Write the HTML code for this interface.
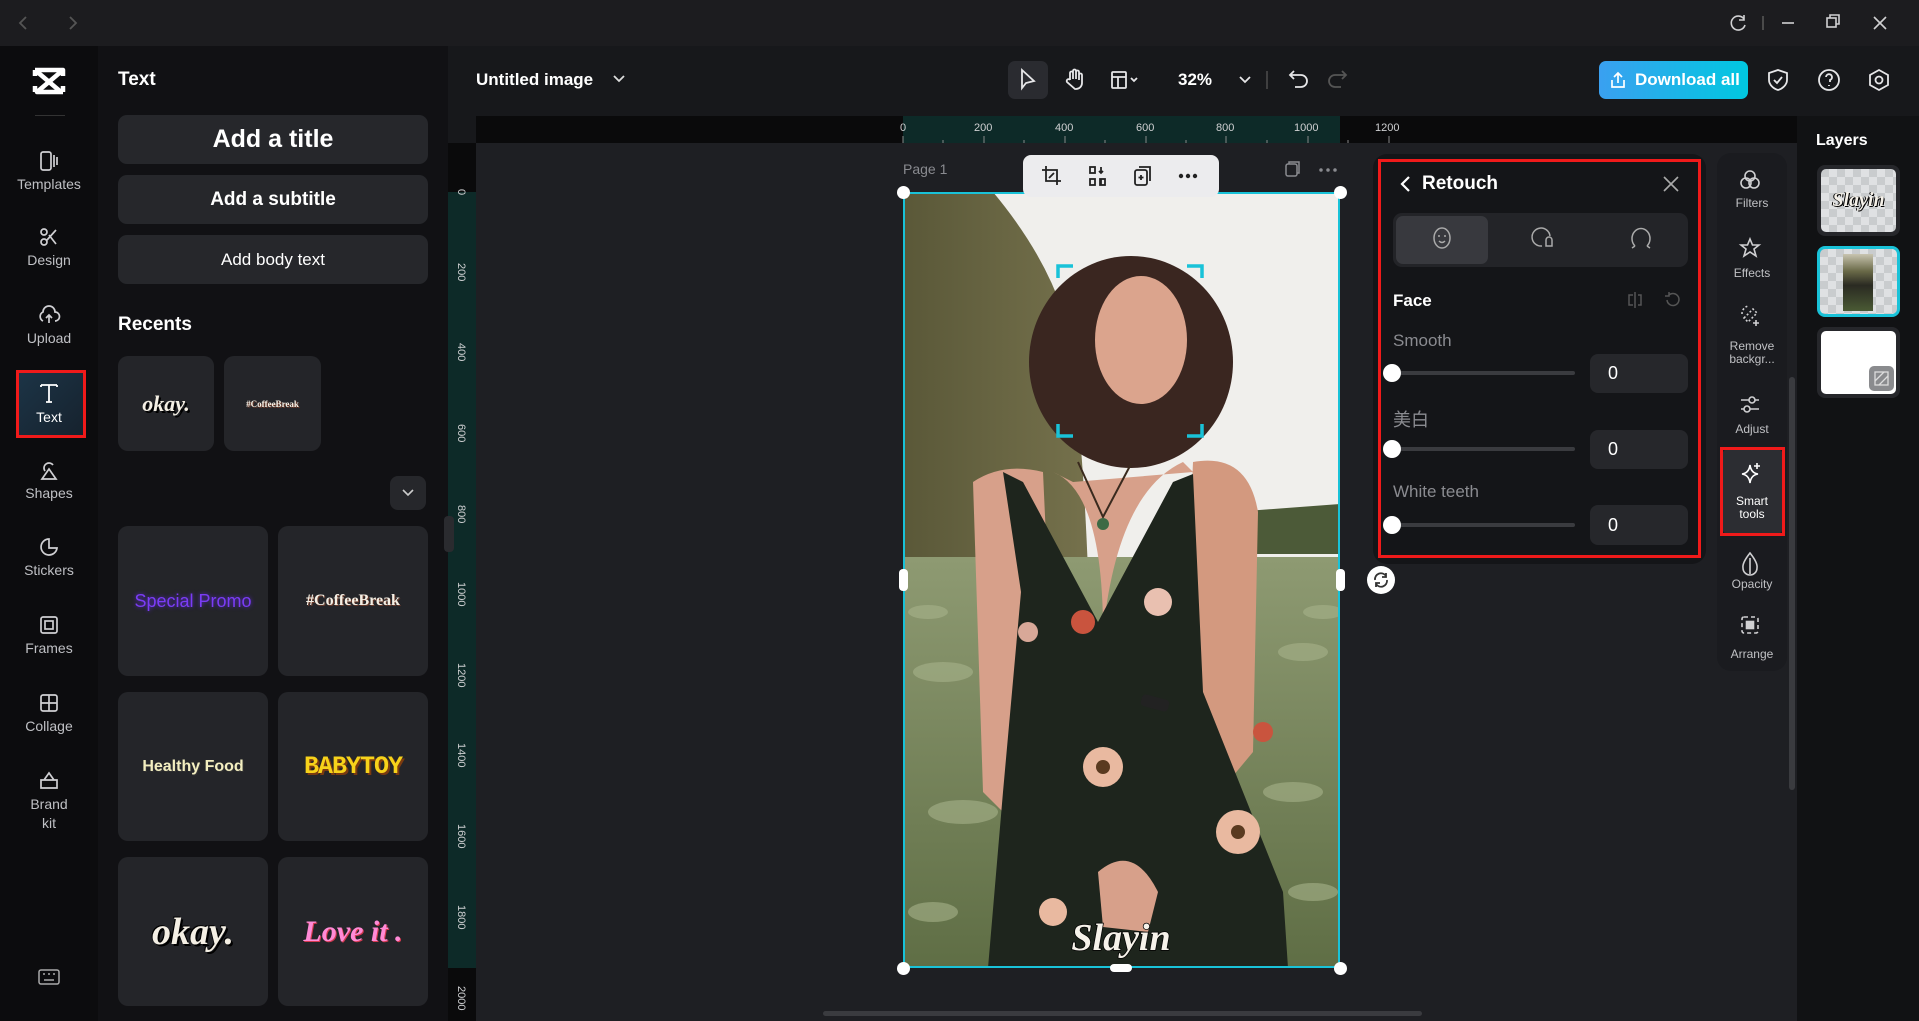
<!DOCTYPE html>
<html><head><meta charset="utf-8"><style>
*{box-sizing:border-box;margin:0;padding:0}
body{width:1919px;height:1021px;background:#1e1f23;font-family:"Liberation Sans","Noto Sans CJK SC",sans-serif;color:#e8e8ea;position:relative;overflow:hidden}
.a{position:absolute}
.titlebar{left:0;top:0;width:1919px;height:46px;background:#1c1c1f}
.rail{left:0;top:46px;width:98px;height:975px;background:#0c0c0e}
.ri{position:absolute;left:0;width:98px;text-align:center;font-size:14px;color:#bfc0c4}
.ri svg{display:block;margin:0 auto 4px}
.panel{left:98px;top:46px;width:350px;height:975px;background:#111114}
.btn{position:absolute;left:118px;width:310px;height:49px;background:#26272b;border-radius:9px;text-align:center;color:#fff;font-weight:bold}
.tile{position:absolute;background:#242529;border-radius:10px;display:flex;align-items:center;justify-content:center}
.toolbar{left:448px;top:46px;width:1471px;height:70px;background:#17181b}
</style></head><body>

<div class="a titlebar"></div>
<svg class="a" style="left:18px;top:14px" width="60" height="18"><path d="M8 3 L2 9 L8 15 M52 3 L58 9 L52 15" stroke="#555" stroke-width="1.8" fill="none"/></svg>
<svg class="a" style="left:1726px;top:13px" width="170" height="20" fill="none" stroke="#d0d0d2" stroke-width="1.6">
<path d="M18 6 A7 7 0 1 0 19 12 M18 2 V7 H13"/>
<path d="M37 3 V17" stroke="#555"/>
<path d="M56 10 H68"/>
<rect x="101" y="5" width="9" height="9"/><path d="M104 5 V2 H113 V11 H110"/>
<path d="M148 4 L160 16 M160 4 L148 16"/>
</svg>

<div class="a rail"></div>
<svg class="a" style="left:32px;top:66px" width="34" height="30" viewBox="0 0 34 30"><path d="M3 4 H31 L5 26 H31 M3 4 L29 26 M3 4 V10 M31 20 V26 M3 26 V20 M31 4 V10" stroke="#fff" stroke-width="4.5" fill="none" stroke-linejoin="round"/></svg>
<div class="a" style="left:35px;top:115px;width:30px;height:1px;background:#333"></div>
<div class="ri" style="top:150px"><svg width="24" height="22" fill="none" stroke="#cfcfd2" stroke-width="1.7"><rect x="4" y="2" width="10" height="18" rx="2"/><path d="M17 5 V17 M20 7 V15"/></svg>Templates</div>
<div class="ri" style="top:226px"><svg width="24" height="22" fill="none" stroke="#cfcfd2" stroke-width="1.7"><circle cx="7" cy="6" r="3"/><circle cx="7" cy="16" r="3"/><path d="M10 14 L19 4 M12 9 L19 18"/></svg>Design</div>
<div class="ri" style="top:304px"><svg width="26" height="22" fill="none" stroke="#cfcfd2" stroke-width="1.7"><path d="M7 17 A5 5 0 0 1 7 8 A6 6 0 0 1 19 8 A4.5 4.5 0 0 1 19 17 M13 19 V11 M10 14 L13 11 L16 14"/></svg>Upload</div>
<div class="a" style="left:16px;top:370px;width:70px;height:68px;border:3px solid #f01a1a;background:linear-gradient(135deg,#1c3446,#16222e)"></div>
<div class="ri" style="top:381px;color:#fff"><svg width="24" height="24" fill="none" stroke="#fff" stroke-width="1.8"><path d="M4 4 H20 M12 4 V21 M9 21 H15 M4 4 V6 M20 4 V6"/></svg>Text</div>
<div class="ri" style="top:459px"><svg width="24" height="22" fill="none" stroke="#cfcfd2" stroke-width="1.7"><path d="M8 12 A5 5 0 1 1 16 6 M12 10 L19 20 H5 Z"/></svg>Shapes</div>
<div class="ri" style="top:536px"><svg width="24" height="22" fill="none" stroke="#cfcfd2" stroke-width="1.7"><path d="M12 3 A8 8 0 1 0 20 12 H12 Z"/></svg>Stickers</div>
<div class="ri" style="top:614px"><svg width="24" height="22" fill="none" stroke="#cfcfd2" stroke-width="1.7"><rect x="4" y="3" width="16" height="16" rx="2"/><rect x="8" y="7" width="8" height="8"/></svg>Frames</div>
<div class="ri" style="top:692px"><svg width="24" height="22" fill="none" stroke="#cfcfd2" stroke-width="1.7"><rect x="4" y="3" width="16" height="16" rx="2"/><path d="M12 3 V19 M4 11 H20"/></svg>Collage</div>
<div class="ri" style="top:769px;line-height:19px"><svg width="24" height="22" fill="none" stroke="#cfcfd2" stroke-width="1.7"><path d="M4 19 V11 H20 V19 Z M7 11 L12 4 L17 11"/></svg>Brand<br>kit</div>
<svg class="a" style="left:38px;top:968px" width="22" height="18" fill="none" stroke="#aaa" stroke-width="1.5"><rect x="1" y="2" width="20" height="14" rx="2"/><path d="M5 6 H7 M10 6 H12 M15 6 H17 M6 12 H16"/></svg>

<div class="a panel"></div>
<div class="a" style="left:118px;top:69px;font-size:19px;font-weight:bold;color:#fff">Text</div>
<div class="btn" style="top:115px;font-size:25px;line-height:49px">Add a title</div>
<div class="btn" style="top:175px;font-size:19px;line-height:49px">Add a subtitle</div>
<div class="btn" style="top:235px;font-size:17px;line-height:49px;font-weight:normal">Add body text</div>
<div class="a" style="left:118px;top:314px;font-size:19px;font-weight:bold;color:#fff">Recents</div>
<div class="tile" style="left:118px;top:356px;width:96px;height:95px"><span style="font-family:'Liberation Serif',serif;font-style:italic;font-weight:bold;font-size:22px;color:#f4efe4;text-shadow:2px 2px 0 #000">okay.</span></div>
<div class="tile" style="left:224px;top:356px;width:97px;height:95px"><span style="font-family:'Liberation Serif',serif;font-weight:bold;font-size:9px;color:#f4efe4;text-shadow:1px 1px 0 #6b3a2a">#CoffeeBreak</span></div>
<div class="a" style="left:390px;top:476px;width:36px;height:34px;background:#26272b;border-radius:8px"></div>
<svg class="a" style="left:400px;top:486px" width="16" height="14"><path d="M3 4 L8 9 L13 4" stroke="#ccc" stroke-width="1.6" fill="none"/></svg>
<div class="tile" style="left:118px;top:526px;width:150px;height:150px"><span style="font-size:18px;color:#7b3cf5;text-shadow:0 0 4px #5a2ad0">Special Promo</span></div>
<div class="tile" style="left:278px;top:526px;width:150px;height:150px"><span style="font-family:'Liberation Serif',serif;font-weight:bold;font-size:16px;color:#f4efe4;text-shadow:1px 1px 0 #6b3a2a">#CoffeeBreak</span></div>
<div class="tile" style="left:118px;top:692px;width:150px;height:149px"><span style="font-weight:bold;font-size:16px;color:#f3eec0;text-shadow:1px 1px 0 #333">Healthy Food</span></div>
<div class="tile" style="left:278px;top:692px;width:150px;height:149px"><span style="font-family:'Liberation Mono',monospace;font-weight:bold;font-size:25px;color:#f7d21a;letter-spacing:-1px;text-shadow:2px 2px 0 #7a3a10">BABYTOY</span></div>
<div class="tile" style="left:118px;top:857px;width:150px;height:149px"><span style="font-family:'Liberation Serif',serif;font-style:italic;font-weight:bold;font-size:38px;color:#f4efe4;text-shadow:2px 2px 0 #000,-1px -1px 0 #000">okay.</span></div>
<div class="tile" style="left:278px;top:857px;width:150px;height:149px"><span style="font-family:'Liberation Serif',serif;font-style:italic;font-weight:bold;font-size:30px;color:#ff8ad6;text-shadow:1px 1px 0 #d43a50">Love it .</span></div>

<div class="a toolbar"></div>
<div class="a" style="left:476px;top:70px;font-size:17px;font-weight:bold;color:#fff">Untitled image</div>
<svg class="a" style="left:612px;top:74px" width="14" height="10"><path d="M2 2 L7 7 L12 2" stroke="#ddd" stroke-width="1.8" fill="none"/></svg>
<div class="a" style="left:1008px;top:61px;width:40px;height:38px;background:#2a2b30;border-radius:7px"></div>
<svg class="a" style="left:1015px;top:67px" width="340" height="26" fill="none" stroke="#e6e6e8" stroke-width="1.8">
<path d="M7 3 L7 21 L11 16 L19 14 Z"/>
<path d="M55 13 V6 a1.5 1.5 0 0 1 3 0 V12 V4 a1.5 1.5 0 0 1 3 0 V12 V5 a1.5 1.5 0 0 1 3 0 V13 V8 a1.5 1.5 0 0 1 3 0 V16 a6 6 0 0 1 -6 6 H60 L52 15 a1.5 1.5 0 0 1 3 -2"/>
<rect x="97" y="5" width="14" height="16" rx="1"/><path d="M97 10 H111 M103 10 V21"/><path d="M116 11 L119 14 L122 11"/>
<path d="M225 10 L230 15 L235 10"/>
<path d="M252 4 V22" stroke="#444"/>
<path d="M275 8 H286 a6 6 0 0 1 0 12 H280 M279 4 L275 8 L279 12"/>
<path d="M331 8 H320 a6 6 0 0 0 0 12 H326 M327 4 L331 8 L327 12" stroke="#555"/>
</svg>
<div class="a" style="left:1178px;top:70px;font-size:17px;font-weight:bold;color:#fff">32%</div>
<div class="a" style="left:1599px;top:61px;width:149px;height:38px;border-radius:7px;background:linear-gradient(90deg,#3aa0f0,#00c8e0);font-size:17px;font-weight:bold;color:#fff;line-height:38px;padding-left:36px">Download all</div>
<svg class="a" style="left:1609px;top:71px" width="18" height="18" fill="none" stroke="#fff" stroke-width="1.7"><path d="M9 12 V2 M5 6 L9 2 L13 6 M3 9 V16 H15 V9"/></svg>
<svg class="a" style="left:1766px;top:68px" width="126" height="24" fill="none" stroke="#e6e6e8" stroke-width="1.8">
<path d="M12 2 L21 5 V12 C21 17 16 21 12 22 C8 21 3 17 3 12 V5 Z M8 12 L11 15 L16 9"/>
<circle cx="63" cy="12" r="10"/><path d="M60 9 a3 3 0 1 1 4 3 V14 M63 17 V18"/>
<path d="M113 2 L122 7 V17 L113 22 L104 17 V7 Z"/><circle cx="113" cy="12" r="3.5"/>
</svg>

<div class="a" style="left:476px;top:116px;width:1321px;height:27px;background:#0a0a0b"></div>
<div class="a" style="left:903px;top:116px;width:437px;height:27px;background:#0d2a28"></div>
<div class="a" style="left:448px;top:143px;width:28px;height:878px;background:#0a0a0b"></div>
<div class="a" style="left:448px;top:192px;width:28px;height:776px;background:#0d2a28"></div>
<div class="a" style="left:448px;top:116px;width:28px;height:27px;background:#17181b"></div>
<svg class="a" style="left:476px;top:116px" width="1321" height="27" font-family="Liberation Sans" font-size="11" fill="#cfd0d2">
<text x="424" y="15">0</text><text x="498" y="15">200</text><text x="579" y="15">400</text><text x="660" y="15">600</text><text x="740" y="15">800</text><text x="818" y="15">1000</text><text x="899" y="15">1200</text>
<path d="M427 20 V27 M467 24 V27 M508 20 V27 M548 24 V27 M589 20 V27 M629 24 V27 M670 20 V27 M710 24 V27 M750 20 V27 M791 24 V27 M832 20 V27 M872 24 V27 M913 20 V27" stroke="#888" stroke-width="1"/>
</svg>
<svg class="a" style="left:448px;top:143px" width="28" height="878" font-family="Liberation Sans" font-size="11" fill="#cfd0d2">
<g transform="rotate(90)">
<text x="46" y="-10">0</text><text x="120" y="-10">200</text><text x="200" y="-10">400</text><text x="281" y="-10">600</text><text x="362" y="-10">800</text><text x="439" y="-10">1000</text><text x="520" y="-10">1200</text><text x="600" y="-10">1400</text><text x="681" y="-10">1600</text><text x="762" y="-10">1800</text><text x="843" y="-10">2000</text>
</g></svg>
<div class="a" style="left:444px;top:516px;width:10px;height:36px;background:#2a2b2f;border-radius:4px"></div>

<div class="a" style="left:903px;top:161px;font-size:14px;color:#8a8b90">Page 1</div>
<svg class="a" style="left:1283px;top:160px" width="60" height="20" fill="none" stroke="#8a8b90" stroke-width="1.5"><rect x="3" y="4" width="11" height="12" rx="2"/><path d="M6 4 V2 H16 V13 H14"/><circle cx="38" cy="10" r="1" fill="#8a8b90"/><circle cx="45" cy="10" r="1" fill="#8a8b90"/><circle cx="52" cy="10" r="1" fill="#8a8b90"/></svg>

<svg class="a" style="left:903px;top:192px" width="437" height="776" viewBox="0 0 437 776">
<defs><linearGradient id="f" x1="0" y1="0" x2="0" y2="1"><stop offset="0" stop-color="#8e9a72"/><stop offset="1" stop-color="#5f6e45"/></linearGradient>
<linearGradient id="t" x1="0" y1="0" x2="1" y2="0"><stop offset="0" stop-color="#5a5838"/><stop offset="1" stop-color="#75714c"/></linearGradient></defs>
<rect width="437" height="776" fill="#f0efec"/>
<path d="M0 0 H90 Q140 60 160 120 Q178 200 185 380 H0 Z" fill="url(#t)"/>
<path d="M330 320 L437 312 V362 H330 Z" fill="#4c5a38"/>
<rect y="365" width="437" height="411" fill="url(#f)"/>
<g fill="#a7b38a" opacity=".6"><ellipse cx="40" cy="480" rx="30" ry="10"/><ellipse cx="400" cy="460" rx="25" ry="9"/><ellipse cx="60" cy="620" rx="35" ry="12"/><ellipse cx="390" cy="600" rx="30" ry="10"/><ellipse cx="30" cy="720" rx="25" ry="10"/><ellipse cx="410" cy="700" rx="25" ry="9"/><ellipse cx="420" cy="420" rx="20" ry="7"/><ellipse cx="25" cy="420" rx="20" ry="7"/></g>
<path d="M70 290 Q100 270 140 280 L150 500 L120 640 L80 600 Z" fill="#d7a08a"/>
<path d="M290 270 Q345 260 355 320 L350 560 L300 620 L280 500 Z" fill="#d3997f"/>
<ellipse cx="228" cy="170" rx="102" ry="106" fill="#3a2620"/>
<ellipse cx="238" cy="148" rx="46" ry="64" fill="#dba48d"/>
<path d="M150 280 Q200 300 200 440 Q215 300 280 270 L290 280 L170 290 Z" fill="#d7a08a"/>
<path d="M100 280 L120 290 L195 430 L270 290 L290 282 L300 500 L380 700 L385 776 H85 L100 600 L118 400 Z" fill="#1e251d"/>
<path d="M195 680 Q230 650 255 700 L245 740 L200 735 Z" fill="#d7a08a"/>
<g><circle cx="200" cy="575" r="20" fill="#e9b9a0"/><circle cx="200" cy="575" r="7" fill="#5a3a20"/><circle cx="335" cy="640" r="22" fill="#e9b9a0"/><circle cx="335" cy="640" r="7" fill="#5a3a20"/><circle cx="180" cy="430" r="12" fill="#c9543e"/><circle cx="255" cy="410" r="14" fill="#e9c0b0"/><circle cx="125" cy="440" r="10" fill="#d8a898"/><circle cx="150" cy="720" r="14" fill="#e9b9a0"/><circle cx="360" cy="540" r="10" fill="#c9543e"/></g>
<rect x="238" y="505" width="28" height="12" rx="4" fill="#222" transform="rotate(15 252 511)"/>
<path d="M175 270 L200 325 L228 272" stroke="#3a2a1e" stroke-width="2" fill="none"/><circle cx="200" cy="332" r="6" fill="#3d6a44"/>
<text x="218" y="758" text-anchor="middle" font-family="Liberation Serif" font-style="italic" font-weight="bold" font-size="38" fill="#f6f2ea" stroke="#000" stroke-width="1.5" paint-order="stroke">Slayin</text>
<g stroke="#19c2d8" stroke-width="3.5" fill="none"><path d="M155 86 V74 H170 M284 74 H299 V86 M155 232 V244 H170 M284 244 H299 V232"/></g>
</svg>
<div class="a" style="left:903px;top:192px;width:437px;height:776px;border:2px solid #19c2d8"></div>
<div class="a" style="left:897px;top:186px;width:13px;height:13px;border-radius:50%;background:#fff"></div>
<div class="a" style="left:1334px;top:186px;width:13px;height:13px;border-radius:50%;background:#fff"></div>
<div class="a" style="left:897px;top:962px;width:13px;height:13px;border-radius:50%;background:#fff"></div>
<div class="a" style="left:1334px;top:962px;width:13px;height:13px;border-radius:50%;background:#fff"></div>
<div class="a" style="left:899px;top:569px;width:9px;height:22px;border-radius:4px;background:#fff"></div>
<div class="a" style="left:1336px;top:569px;width:9px;height:22px;border-radius:4px;background:#fff"></div>
<div class="a" style="left:1110px;top:964px;width:22px;height:8px;border-radius:4px;background:#fff"></div>

<div class="a" style="left:1023px;top:155px;width:196px;height:42px;background:#ececee;border-radius:8px"></div>
<svg class="a" style="left:1040px;top:164px" width="170" height="24" fill="none" stroke="#222" stroke-width="1.8">
<path d="M6 2 V17 H21 M2 6 H17 V21 M9 14 L14 9"/>
<rect x="50" y="3" width="5" height="6"/><rect x="50" y="15" width="5" height="6"/><path d="M61 3 V9 M59 7 L61 9 L63 7 M61 21 V15"/><rect x="60" y="15" width="5" height="6"/>
<rect x="95" y="6" width="12" height="15" rx="2"/><path d="M99 3 H110 V17 M101 11 V16 M98.5 13.5 H103.5"/>
<circle cx="141" cy="12" r="1.3" fill="#222"/><circle cx="148" cy="12" r="1.3" fill="#222"/><circle cx="155" cy="12" r="1.3" fill="#222"/>
</svg>

<div class="a" style="left:1373px;top:154px;width:333px;height:410px;background:#141518;border-radius:14px"></div>
<div class="a" style="left:1378px;top:159px;width:323px;height:399px;border:3px solid #f01a1a"></div>
<svg class="a" style="left:1399px;top:174px" width="14" height="20"><path d="M10 3 L3 10 L10 17" stroke="#fff" stroke-width="2.2" fill="none"/></svg>
<div class="a" style="left:1422px;top:173px;font-size:19px;font-weight:bold;color:#fff">Retouch</div>
<svg class="a" style="left:1662px;top:175px" width="18" height="18"><path d="M2 2 L16 16 M16 2 L2 16" stroke="#aaa" stroke-width="1.6"/></svg>
<div class="a" style="left:1393px;top:213px;width:295px;height:54px;background:#232428;border-radius:9px"></div>
<div class="a" style="left:1396px;top:216px;width:92px;height:48px;background:#38393e;border-radius:7px"></div>
<svg class="a" style="left:1430px;top:226px" width="230" height="26" fill="none" stroke="#aaa" stroke-width="1.5">
<ellipse cx="12" cy="12" rx="8" ry="10"/><path d="M8 10 H10 M14 10 H16 M9 15 Q12 18 15 15"/>
<path d="M112 20 A9 9 0 1 1 120 10 M116 14 a3 3 0 0 1 6 0 V20 H116 Z"/>
<path d="M205 20 A9 10 0 1 1 217 20 M202 22 L205 20 M220 22 L217 20"/>
</svg>
<div class="a" style="left:1393px;top:291px;font-size:17px;font-weight:bold;color:#fff">Face</div>
<svg class="a" style="left:1625px;top:290px" width="60" height="20" fill="none" stroke="#555" stroke-width="1.5"><path d="M10 2 V18 M8 5 H4 V15 H8 M13 5 H16 V15 H13"/><path d="M44 5 A6 6 0 1 1 42 10 M44 2 V6 H40"/></svg>
<div class="a" style="left:1393px;top:331px;font-size:17px;color:#8a8b90">Smooth</div>
<div class="a" style="left:1393px;top:406px;font-size:18px;color:#8a8b90">美白</div>
<div class="a" style="left:1393px;top:482px;font-size:17px;color:#8a8b90">White teeth</div>
<div class="a" style="left:1393px;top:371px;width:182px;height:4px;background:#3a3b3f;border-radius:2px"></div>
<div class="a" style="left:1393px;top:447px;width:182px;height:4px;background:#3a3b3f;border-radius:2px"></div>
<div class="a" style="left:1393px;top:523px;width:182px;height:4px;background:#3a3b3f;border-radius:2px"></div>
<div class="a" style="left:1383px;top:364px;width:18px;height:18px;border-radius:50%;background:#fff"></div>
<div class="a" style="left:1383px;top:440px;width:18px;height:18px;border-radius:50%;background:#fff"></div>
<div class="a" style="left:1383px;top:516px;width:18px;height:18px;border-radius:50%;background:#fff"></div>
<div class="a" style="left:1590px;top:354px;width:98px;height:39px;background:#26272b;border-radius:8px;font-size:18px;line-height:39px;padding-left:18px;color:#fff">0</div>
<div class="a" style="left:1590px;top:430px;width:98px;height:39px;background:#26272b;border-radius:8px;font-size:18px;line-height:39px;padding-left:18px;color:#fff">0</div>
<div class="a" style="left:1590px;top:505px;width:98px;height:40px;background:#26272b;border-radius:8px;font-size:18px;line-height:40px;padding-left:18px;color:#fff">0</div>
<div class="a" style="left:1367px;top:566px;width:28px;height:28px;border-radius:50%;background:#fff"></div>
<svg class="a" style="left:1372px;top:571px" width="18" height="18" fill="none" stroke="#333" stroke-width="1.8"><path d="M3 9 A6 6 0 0 1 14 5 M15 9 A6 6 0 0 1 4 13 M14 2 V6 H10 M4 16 V12 H8"/></svg>

<div class="a" style="left:1717px;top:153px;width:70px;height:518px;background:#1a1b1f;border-radius:14px"></div>
<div class="a" style="left:1789px;top:377px;width:6px;height:413px;background:#3a3b3f;border-radius:3px"></div>
<div class="a" style="left:1722px;top:448px;width:61px;height:87px;background:#2c2d32;border-radius:8px"></div>
<div class="a" style="left:1720px;top:447px;width:65px;height:89px;border:3px solid #f01a1a"></div>
<svg class="a" style="left:1738px;top:168px" width="24" height="510" fill="none" stroke="#d0d0d2" stroke-width="1.6">
<circle cx="12" cy="8" r="5"/><circle cx="8" cy="15" r="5"/><circle cx="16" cy="15" r="5"/>
<path d="M12 71 L14.5 77 L21 77 L16 81 L18 88 L12 84 L6 88 L8 81 L3 77 L9.5 77 Z"/>
<path d="M6 150 L15 141 L19 145 L10 154 Z M4 146 A8 8 0 0 1 10 138" stroke-dasharray="2 2"/><path d="M18 152 V158 M15 155 H21"/>
<path d="M3 232 H21 M3 241 H21"/><circle cx="14" cy="232" r="3" fill="#1a1b1f"/><circle cx="9" cy="241" r="3" fill="#1a1b1f"/>
<path d="M12 297 Q13 305 20 306 Q13 307 12 315 Q11 307 4 306 Q11 305 12 297 Z M19 295 V301 M16 298 H22" stroke="#fff"/>
<path d="M12 385 Q20 395 19 400 A7 7 0 0 1 5 400 Q4 395 12 385 Z M12 390 V406"/>
<rect x="4" y="449" width="16" height="16" rx="2" stroke-dasharray="4 3"/><rect x="8.5" y="453.5" width="7" height="7" fill="#d0d0d2"/>
</svg>
<div class="a" style="left:1717px;top:197px;width:70px;text-align:center;font-size:12px;color:#c0c1c4;line-height:13px">Filters</div>
<div class="a" style="left:1717px;top:267px;width:70px;text-align:center;font-size:12px;color:#c0c1c4;line-height:13px">Effects</div>
<div class="a" style="left:1717px;top:340px;width:70px;text-align:center;font-size:12px;color:#c0c1c4;line-height:13px">Remove<br>backgr...</div>
<div class="a" style="left:1717px;top:423px;width:70px;text-align:center;font-size:12px;color:#c0c1c4;line-height:13px">Adjust</div>
<div class="a" style="left:1717px;top:495px;width:70px;text-align:center;font-size:12px;color:#fff;line-height:13px">Smart<br>tools</div>
<div class="a" style="left:1717px;top:578px;width:70px;text-align:center;font-size:12px;color:#c0c1c4;line-height:13px">Opacity</div>
<div class="a" style="left:1717px;top:648px;width:70px;text-align:center;font-size:12px;color:#c0c1c4;line-height:13px">Arrange</div>

<div class="a" style="left:1797px;top:116px;width:122px;height:905px;background:#111214"></div>
<div class="a" style="left:1816px;top:132px;font-size:16px;font-weight:bold;color:#fff">Layers</div>
<div class="a" style="left:1817px;top:165px;width:83px;height:71px;background:#26272b;border-radius:8px"></div>
<div class="a" style="left:1821px;top:169px;width:75px;height:63px;border-radius:5px;background:repeating-conic-gradient(#dfe1e3 0 25%,#c9ccce 0 50%) 0 0/16px 16px;display:flex;align-items:center;justify-content:center"><span style="font-family:'Liberation Serif',serif;font-style:italic;font-weight:bold;font-size:20px;color:#f6f2ea;text-shadow:1px 1px 0 #000,-1px 0 0 #000">Slayin</span></div>
<div class="a" style="left:1817px;top:246px;width:83px;height:71px;border:3px solid #19c2d8;border-radius:8px;background:repeating-conic-gradient(#dfe1e3 0 25%,#c9ccce 0 50%) 0 0/16px 16px"></div>
<div class="a" style="left:1843px;top:254px;width:30px;height:57px;background:linear-gradient(180deg,#c8c4b0 0,#6a6a48 30%,#2a2a22 55%,#4a5a34 100%)"></div>
<div class="a" style="left:1817px;top:327px;width:83px;height:71px;background:#26272b;border-radius:8px"></div>
<div class="a" style="left:1821px;top:331px;width:75px;height:63px;border-radius:5px;background:#fff"></div>
<div class="a" style="left:1869px;top:366px;width:25px;height:25px;border-radius:5px;background:#8a8b8e"></div>
<svg class="a" style="left:1874px;top:371px" width="15" height="15" fill="none" stroke="#ddd" stroke-width="1.3"><rect x="1" y="1" width="13" height="13"/><path d="M1 10 L10 1 M5 14 L14 5"/></svg>

<div class="a" style="left:823px;top:1011px;width:599px;height:5px;background:#3a3b3f;border-radius:3px"></div>
</body></html>
